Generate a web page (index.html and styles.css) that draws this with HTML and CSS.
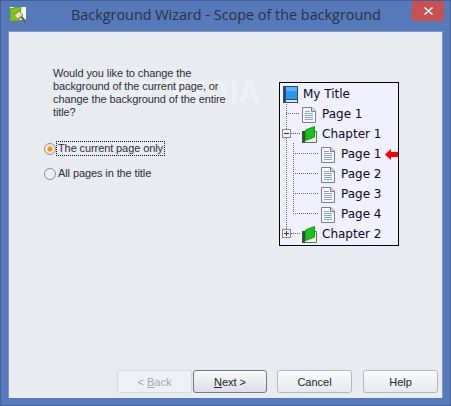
FILE: index.html
```html
<!DOCTYPE html>
<html lang="en">
  <head>
    <meta charset="UTF-8" />
    <title>Background Wizard - Scope of the background</title>
    <link rel="stylesheet" href="styles.css">
  </head>
  <body>
    <svg class="defs" width="0" height="0">
      <symbol id="page" viewBox="0 0 15 17">
        <path d="M.5 1.500H10L13.500 5V16.500H.5Z" fill="#f7f9fc" stroke="#767f8c"/>
        <path d="M9.500 1.500V5.500H13.500" fill="#d5dde8" stroke="#767f8c"/>
        <path d="M3 5.500H8M3 7.500H11M3 9.500H11M3 11.500H11M3 13.500H11" stroke="#8aa4ca"/>
      </symbol>
      <symbol id="chapter" viewBox="0 0 15 17">
        <path d="M.5 5.500H14.500V16.500H.5Z" fill="#eef4e8" stroke="#4f7a4f"/>
        <path d="M0 5H3V17H0Z" fill="#34523a"/>
        <path d="M3.500 14.500V4L12.500.5V11Z" fill="#19c419" stroke="#0f9a0f"/>
      </symbol>
      <symbol id="book" viewBox="0 0 15 17">
        <path d="M0 0H15V17H0Z" fill="#2f4a66"/>
        <path d="M3 1H14V13H3Z" fill="#2b97ee"/>
        <path d="M3 1H14V5H3Z" fill="#58b4f5"/>
        <path d="M3 14H14V16H3Z" fill="#dce6f0"/>
      </symbol>
    </svg>

    <div class="window">
      <!-- Title bar -->
      <div class="titlebar">
        <svg class="app-icon" width="17" height="17" viewBox="0 0 17 17">
          <path d="M0 0H16V13H0Z" fill="#f4f6f4"/>
          <path d="M0 2L8 0H11L9 14H0Z" fill="#7fc41c" stroke="#5c9c10"/>
          <path d="M4 9L9 4L13 8L8 12Z" fill="#e8e2b0" stroke="#8a8a7a"/>
          <path d="M10 10L12 9L16.500 14L15 16Z" fill="#5f6165"/>
        </svg>
        <span class="title">Background Wizard - Scope of the background</span>
        <div class="close">
          <svg width="9" height="8" viewBox="0 0 9 8">
            <path d="M1 0L4.500 3L8 0L9 1L5.500 4L9 7L8 8L4.500 5L1 8L0 7L3.500 4L0 1Z" fill="#fff"/>
          </svg>
        </div>
      </div>

      <div class="client">
        <span class="watermark">SOFTPEDIA</span>
        <div class="content">
          <!-- Question and options -->
          <div class="options">
            <p class="question">Would you like to change the background of the current page, or change the background of the entire title?</p>
            <div class="radio-row">
              <span class="radio checked"></span>
              <span class="radio-label focused">The current page only</span>
            </div>
            <div class="radio-row">
              <span class="radio"></span>
              <span class="radio-label">All pages in the title</span>
            </div>
          </div>

          <!-- Preview tree -->
          <div class="tree">
            <svg class="tree-lines" width="118" height="162" viewBox="0 0 118 162">
              <g stroke="#666" stroke-dasharray="1 1" fill="none">
                <path d="M6.500 19V146M6 30.500H20M11 50.500H20M11 150.500H20"/>
                <path d="M13.500 60V131M13 70.500H38M13 90.500H38M13 110.500H38M13 130.500H38"/>
              </g>
              <g fill="#eef0f4" stroke="#85888c">
                <rect x="2.500" y="46.500" width="8" height="8"/>
                <rect x="2.500" y="146.500" width="8" height="8"/>
              </g>
              <path d="M4 50.500H9M4 150.500H9M6.500 148V153" stroke="#333"/>
            </svg>
            <div class="node level-0"><svg class="node-icon"><use href="#book"/></svg><span>My Title</span></div>
            <div class="node level-1"><svg class="node-icon"><use href="#page"/></svg><span>Page 1</span></div>
            <div class="node level-1"><svg class="node-icon"><use href="#chapter"/></svg><span>Chapter 1</span></div>
            <div class="node level-2">
              <svg class="node-icon"><use href="#page"/></svg><span>Page 1</span>
              <svg class="arrow" width="13" height="11" viewBox="0 0 13 11">
                <path d="M0 5.500L6 0V3H13V8H6V11Z" fill="#f00"/>
              </svg>
            </div>
            <div class="node level-2"><svg class="node-icon"><use href="#page"/></svg><span>Page 2</span></div>
            <div class="node level-2"><svg class="node-icon"><use href="#page"/></svg><span>Page 3</span></div>
            <div class="node level-2"><svg class="node-icon"><use href="#page"/></svg><span>Page 4</span></div>
            <div class="node level-1"><svg class="node-icon"><use href="#chapter"/></svg><span>Chapter 2</span></div>
          </div>
        </div>

        <!-- Wizard buttons -->
        <div class="buttons">
          <div class="nav-group">
            <button class="btn" disabled>&lt; <u>B</u>ack</button>
            <button class="btn default"><u>N</u>ext &gt;</button>
          </div>
          <button class="btn">Cancel</button>
          <button class="btn">Help</button>
        </div>
      </div>
    </div>
  </body>
</html>
```

FILE: styles.css
```css
html,
body {
  margin: 0;
  padding: 0;
  height: 100%;
  overflow: hidden;
}
.defs {
  position: absolute;
}
.window {
  box-sizing: border-box;
  width: 451px;
  height: 406px;
  display: flex;
  flex-direction: column;
  background-color: #5679ba;
  border: 1px solid #45609a;
  padding: 0 7px 7px 7px;
}
/* Title bar */
.titlebar {
  height: 30px;
  flex: none;
  display: flex;
  align-items: flex-start;
  position: relative;
}
.app-icon {
  margin: 6px 0 0 2px;
  flex: none;
}
.title {
  margin: 4px 0 0 44px;
  font-family: "Open Sans", sans-serif;
  font-size: 14.4px;
  line-height: 20px;
  color: #2b3144;
  white-space: nowrap;
}
.close {
  position: absolute;
  top: 0;
  right: -1px;
  width: 32px;
  height: 20px;
  background-color: #c75050;
  display: flex;
  align-items: center;
  justify-content: center;
}
/* Client area */
.client {
  flex: 1;
  position: relative;
  display: flex;
  flex-direction: column;
  background-color: #e8ebf0;
  border: 1px solid #7f97c6;
  border-bottom: none;
  font-family: "Liberation Sans", sans-serif;
  font-size: 11px;
  color: #2c2f38;
}
.watermark {
  position: absolute;
  left: 88px;
  top: 42px;
  font-family: "Open Sans", sans-serif;
  font-size: 30px;
  font-weight: 700;
  line-height: 36px;
  color: #eff1f5;
}
.content {
  flex: 1;
  position: relative;
  display: flex;
  justify-content: space-between;
  padding: 35px 43px 0 44px;
}
.options {
  width: 180px;
  letter-spacing: -0.1px;
}
.question {
  margin: 0 0 17px;
  line-height: 13px;
}
.radio-row {
  height: 25px;
  display: flex;
  align-items: center;
  margin-left: -9px;
}
.radio {
  box-sizing: border-box;
  width: 12px;
  height: 12px;
  border-radius: 50%;
  flex: none;
  border: 1px solid #8a8e94;
  background: #eceef1;
}
.radio.checked {
  border-color: #9a8a78;
  background: radial-gradient(circle, #e8820e 0, #f19a22 32%, #f8e6cc 42%, #efeff2 100%);
}
.radio-label {
  padding: 0 1px;
  line-height: 13px;
  border: 1px dotted transparent;
  white-space: nowrap;
}
.radio-label.focused {
  border-color: #111;
}
/* Preview tree */
.tree {
  box-sizing: border-box;
  width: 120px;
  height: 164px;
  margin-top: 15px;
  padding-top: 1px;
  position: relative;
  flex: none;
  background-color: #f0f0fe;
  border: 1px solid #000;
  font-family: "DejaVu Sans", sans-serif;
  font-size: 12px;
  color: #0a0a28;
}
.tree-lines {
  position: absolute;
  left: 0;
  top: 0;
}
.node {
  height: 20px;
  position: relative;
  display: flex;
  align-items: center;
  white-space: nowrap;
}
.node-icon {
  width: 15px;
  height: 17px;
  flex: none;
  margin-right: 5px;
}
.level-0 {
  padding-left: 3px;
}
.level-1 {
  padding-left: 22px;
}
.level-2 {
  padding-left: 41px;
}
.arrow {
  margin-left: 3px;
}
/* Wizard buttons */
.buttons {
  flex: none;
  display: flex;
  justify-content: flex-end;
  gap: 11px;
  padding: 0 4px 5px 0;
}
.nav-group {
  display: flex;
  gap: 1px;
  margin-right: -1px;
}
.btn {
  box-sizing: border-box;
  width: 75px;
  height: 23px;
  padding: 0;
  border: 1px solid #b4b8be;
  border-radius: 3px;
  background: linear-gradient(to bottom, #fafbfc 0%, #e6e8ec 100%);
  font-family: "Liberation Sans", sans-serif;
  font-size: 11px;
  color: #22252c;
}
.btn.default {
  width: 74px;
  border-color: #6f7784;
  background: linear-gradient(to bottom, #f8f9fa 0%, #dcdfe4 100%);
}
.btn:disabled {
  border-color: #d6dae0;
  background: #eef0f4;
  color: #a3a7ae;
}
```
